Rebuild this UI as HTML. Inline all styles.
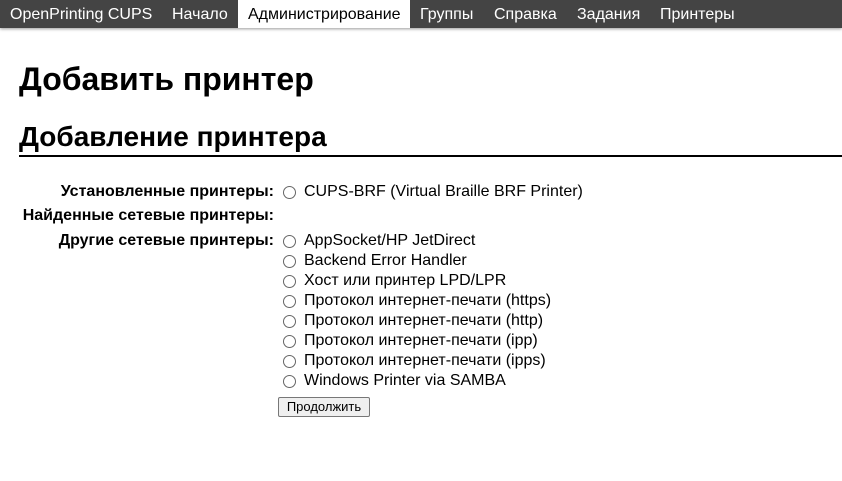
<!DOCTYPE html>
<html><head><meta charset="utf-8"><style>
body{margin:0;width:842px;height:481px;background:#fff;font-family:"Liberation Sans",sans-serif;color:#000;position:relative;overflow:hidden}
.nav{position:absolute;left:0;top:0;width:842px;height:28px;background:#444;box-shadow:0 1px 3px rgba(0,0,0,.4)}
.nav span{position:absolute;top:0;height:28px;line-height:29px;font-size:16px;color:#fff}
.nav span.a{background:#fff;color:#000;padding:0 9px 0 10px}
h1{position:absolute;left:19px;top:61px;margin:0;font-size:32px;font-weight:bold}
h2{position:absolute;left:19px;top:121px;margin:0;font-size:28px;font-weight:bold}
.rule{position:absolute;left:19px;top:155px;width:823px;height:2px;background:#000}
.l{position:absolute;right:568px;font-size:16px;font-weight:bold;white-space:nowrap}
.r{position:absolute;left:283px;width:11px;height:11px;border:1px solid #666;border-radius:50%}
.t{position:absolute;left:304px;font-size:16px;white-space:nowrap}
.btn{position:absolute;left:278px;top:397px;width:90px;height:18px;border:1px solid #777;border-radius:2px;background:#efefef;font-size:13px;line-height:18px;text-align:center}
</style></head><body>
<div class="nav">
<span style="left:10px">OpenPrinting CUPS</span>
<span style="left:172px">Начало</span>
<span class="a" style="left:238px">Администрирование</span>
<span style="left:420px">Группы</span>
<span style="left:494px">Справка</span>
<span style="left:577px">Задания</span>
<span style="left:660px">Принтеры</span>
</div>
<h1>Добавить принтер</h1>
<h2>Добавление принтера</h2>
<div class="rule"></div>
<div class="l" style="top:183px">Установленные принтеры:</div>
<div class="l" style="top:207px">Найденные сетевые принтеры:</div>
<div class="l" style="top:232px">Другие сетевые принтеры:</div>
<div class="r" style="top:186px"></div><div class="t" style="top:183px">CUPS-BRF (Virtual Braille BRF Printer)</div>
<div class="r" style="top:235px"></div><div class="t" style="top:232px">AppSocket/HP JetDirect</div>
<div class="r" style="top:255px"></div><div class="t" style="top:252px">Backend Error Handler</div>
<div class="r" style="top:275px"></div><div class="t" style="top:272px">Хост или принтер LPD/LPR</div>
<div class="r" style="top:295px"></div><div class="t" style="top:292px">Протокол интернет-печати (https)</div>
<div class="r" style="top:315px"></div><div class="t" style="top:312px">Протокол интернет-печати (http)</div>
<div class="r" style="top:335px"></div><div class="t" style="top:332px">Протокол интернет-печати (ipp)</div>
<div class="r" style="top:355px"></div><div class="t" style="top:352px">Протокол интернет-печати (ipps)</div>
<div class="r" style="top:375px"></div><div class="t" style="top:372px">Windows Printer via SAMBA</div>
<div class="btn">Продолжить</div>
</body></html>
